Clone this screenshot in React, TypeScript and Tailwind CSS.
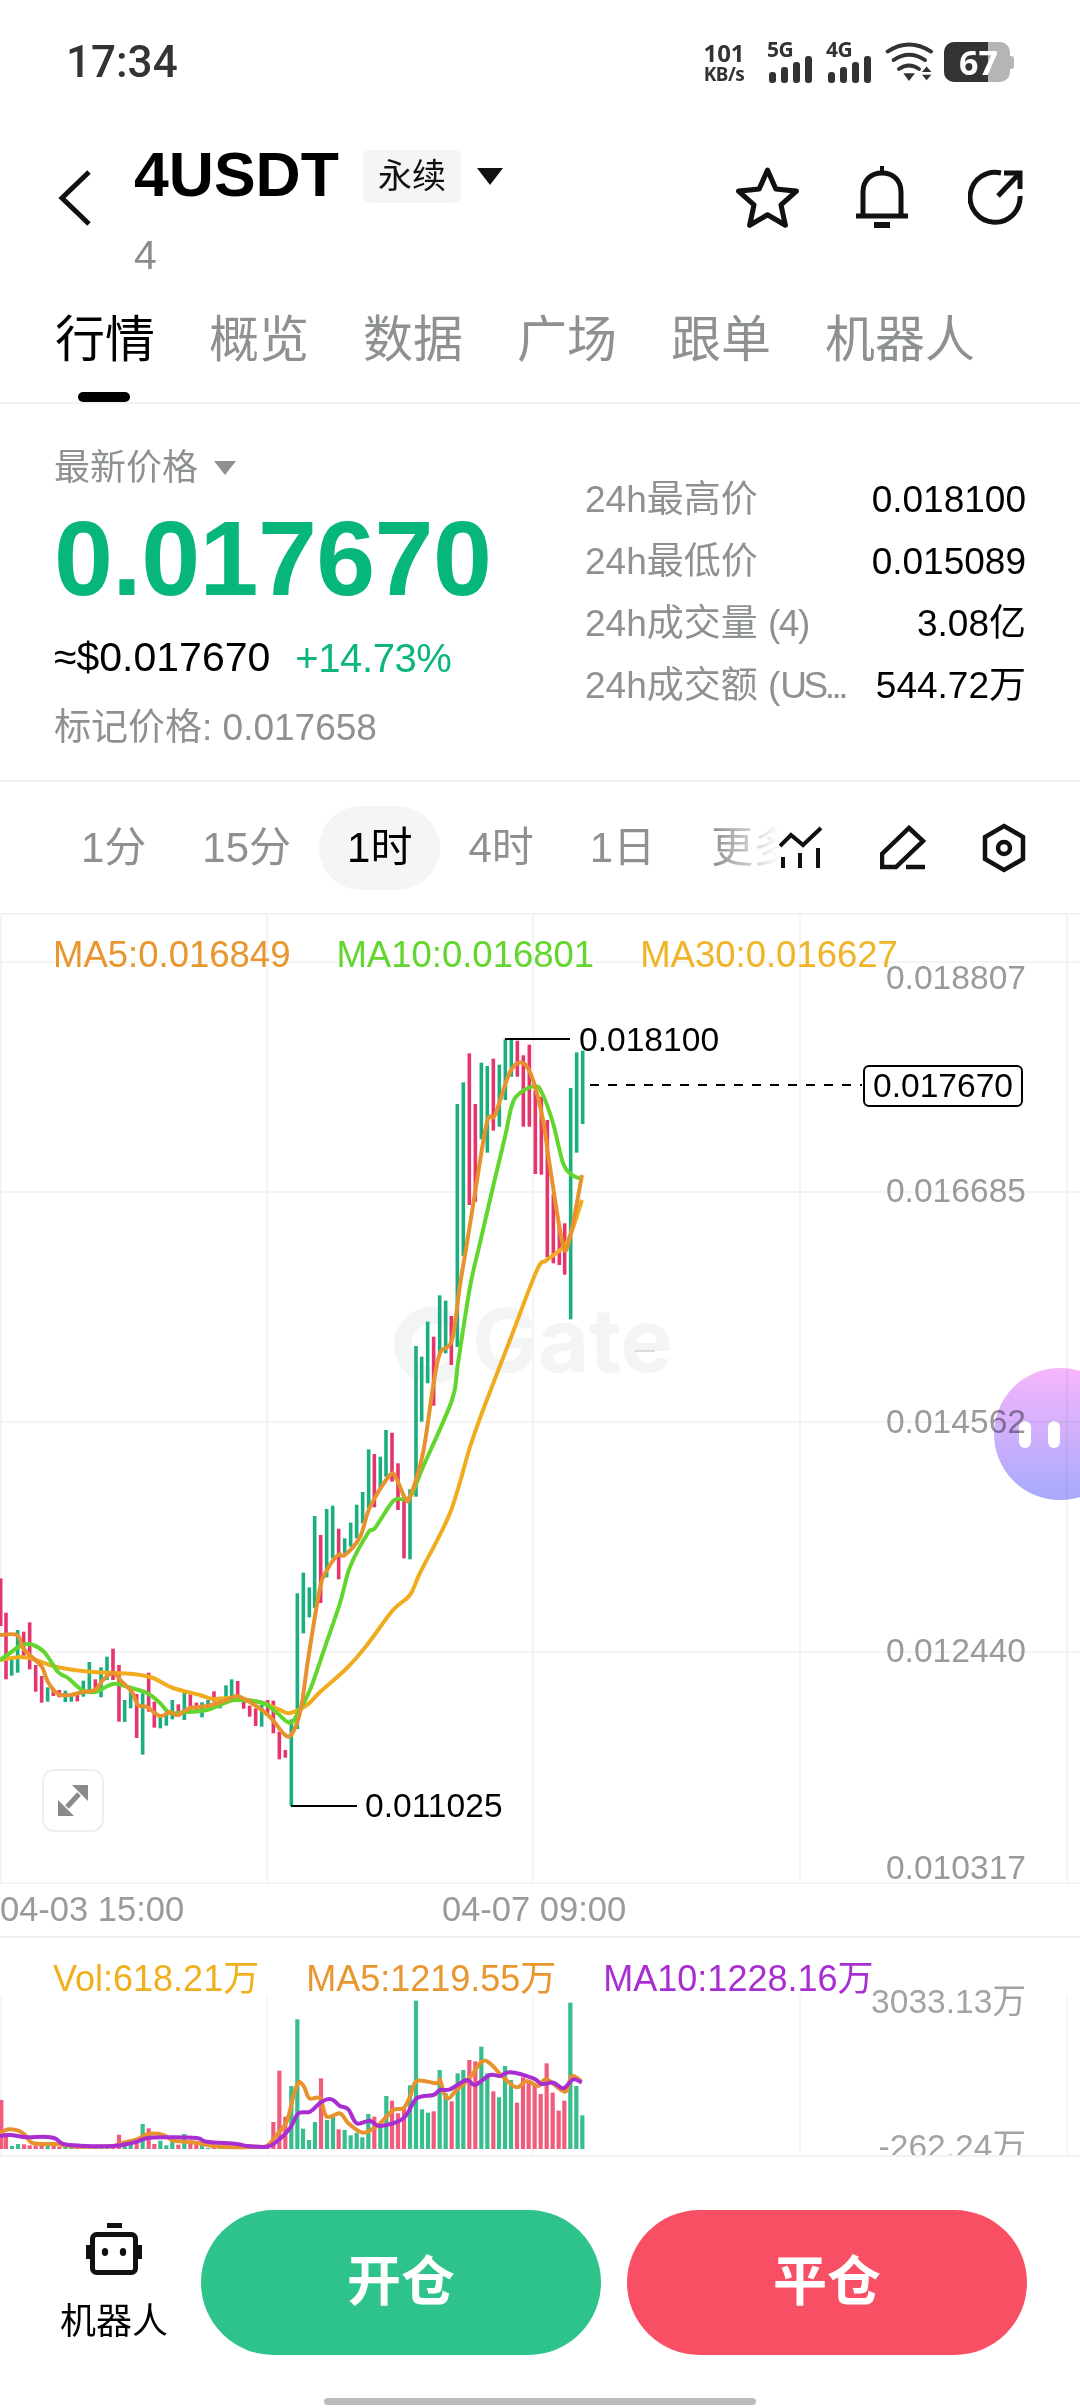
import React from 'react';

type Bar = [number, number, number, 'g' | 'r'];
type Pt = [number, number];

// read off the reference crops, converted to page px below
const barsA: Bar[] = [
  [2, 55, 198, 'r'], [18, 158, 358, 'r'], [35, 300, 347, 'g'], [53, 210, 338, 'g'], [71, 215, 290, 'r'],
  [89, 187, 328, 'r'], [107, 315, 395, 'r'], [125, 348, 428, 'r'], [143, 382, 425, 'g'], [160, 385, 408, 'r'],
  [178, 390, 412, 'r'], [196, 392, 426, 'g'], [214, 405, 425, 'g'], [232, 397, 424, 'r'], [250, 362, 410, 'g'],
  [268, 306, 392, 'g'], [286, 358, 390, 'r'], [303, 322, 412, 'g'], [321, 290, 360, 'g'], [339, 266, 360, 'r'],
  [357, 315, 485, 'r'], [374, 420, 486, 'g'], [392, 388, 445, 'g'], [410, 402, 534, 'r'], [428, 400, 584, 'g'],
  [446, 338, 455, 'r'], [463, 425, 503, 'r'], [481, 470, 505, 'g'], [499, 460, 497, 'g'], [517, 420, 478, 'g'],
  [535, 433, 470, 'r'], [553, 398, 480, 'g'], [571, 403, 440, 'r'], [589, 428, 450, 'r'], [606, 427, 472, 'g'],
  [624, 420, 440, 'g'], [642, 394, 425, 'r'], [660, 415, 445, 'g'], [678, 376, 420, 'g'], [695, 358, 410, 'g'],
  [713, 363, 425, 'r'], [731, 420, 446, 'r'], [749, 437, 470, 'r'], [767, 445, 498, 'r'], [785, 435, 500, 'g'],
  [803, 420, 460, 'r'], [820, 422, 520, 'r'], [838, 515, 598, 'r'], [856, 570, 593, 'r'], [874, 478, 738, 'g'],
  [892, 100, 507, 'g'], [910, 38, 220, 'g'], [928, 82, 172, 'g'],
];
const barsB: Bar[] = [
  [74, 678, 954, 'g'], [92, 735, 939, 'r'], [110, 657, 862, 'g'], [128, 647, 805, 'g'], [146, 716, 868, 'r'],
  [164, 745, 790, 'g'], [182, 698, 770, 'g'], [200, 644, 745, 'g'], [218, 606, 700, 'g'], [236, 478, 655, 'g'],
  [253, 492, 652, 'r'], [271, 500, 600, 'g'], [288, 420, 560, 'g'], [306, 428, 575, 'r'], [324, 520, 660, 'r'],
  [342, 630, 805, 'r'], [360, 598, 808, 'g'], [378, 168, 620, 'g'], [395, 200, 395, 'g'], [413, 95, 280, 'g'],
  [431, 140, 347, 'r'], [449, 16, 190, 'g'], [467, 32, 190, 'g'], [484, 78, 225, 'r'],
];
const barsC: Bar[] = [
  [232, 372, 1101, 'g'], [250, 307, 828, 'g'], [268, 220, 675, 'r'], [286, 372, 665, 'r'], [304, 248, 478, 'g'],
  [322, 258, 518, 'g'], [340, 236, 452, 'r'], [358, 254, 440, 'g'], [376, 178, 360, 'g'], [394, 180, 290, 'g'],
  [412, 182, 290, 'r'], [430, 226, 440, 'r'], [448, 194, 440, 'r'], [466, 332, 582, 'r'], [484, 350, 584, 'r'],
  [502, 420, 832, 'r'], [520, 642, 850, 'r'], [538, 740, 855, 'r'], [554, 730, 884, 'r'], [572, 324, 1018, 'g'],
  [590, 217, 518, 'g'], [608, 212, 432, 'g'],
];

const ma5: Pt[] = [
  [0, 1635], [17, 1635], [23, 1648], [33, 1658], [42, 1667], [48, 1682], [58, 1694], [70, 1695], [83, 1692],
  [95, 1690], [103, 1680], [113, 1673], [122, 1682], [132, 1692], [138, 1705], [147, 1707], [160, 1716],
  [170, 1712], [178, 1715], [190, 1708], [207, 1706], [227, 1700], [237, 1696], [253, 1704], [270, 1717],
  [283, 1733], [290, 1736], [297, 1723], [302, 1703], [308, 1660], [320, 1588], [327, 1570], [338, 1555],
  [345, 1555], [360, 1537], [370, 1507], [390, 1475], [397, 1480], [405, 1498], [410, 1497], [423, 1453],
  [433, 1387], [440, 1353], [452, 1340], [460, 1285], [467, 1243], [475, 1193], [487, 1122], [495, 1115],
  [510, 1072], [523, 1063], [533, 1080], [543, 1120], [550, 1167], [563, 1245], [570, 1237], [582, 1175],
];
const ma10: Pt[] = [
  [0, 1660], [10, 1653], [22, 1645], [33, 1645], [45, 1653], [58, 1672], [68, 1678], [82, 1690], [95, 1692],
  [113, 1684], [128, 1687], [147, 1693], [160, 1703], [170, 1713], [187, 1712], [207, 1710], [227, 1702],
  [238, 1700], [263, 1703], [277, 1713], [290, 1723], [298, 1713], [310, 1690], [325, 1647], [340, 1603],
  [350, 1567], [368, 1533], [375, 1528], [390, 1505], [397, 1499], [410, 1497], [423, 1467], [452, 1400],
  [458, 1363], [470, 1287], [480, 1243], [493, 1187], [505, 1137], [512, 1105], [520, 1093], [535, 1086],
  [542, 1093], [553, 1123], [563, 1163], [572, 1175], [582, 1179],
];
const ma30: Pt[] = [
  [0, 1660], [20, 1657], [33, 1659], [57, 1667], [93, 1672], [133, 1674], [153, 1678], [173, 1688], [200, 1695],
  [213, 1699], [233, 1698], [263, 1703], [280, 1710], [290, 1713], [307, 1705], [320, 1692], [347, 1668],
  [367, 1645], [393, 1610], [410, 1595], [420, 1573], [450, 1513], [470, 1447], [483, 1410], [510, 1340],
  [537, 1270], [547, 1260], [567, 1242], [582, 1200],
];

const volA: [number, number, 'g' | 'r'][] = [
  [4, 300, 'r'], [18, 400, 'r'], [36, 438, 'g'], [54, 432, 'g'], [72, 433, 'r'], [89, 436, 'r'], [107, 436, 'r'],
  [125, 436, 'r'], [143, 434, 'g'], [161, 435, 'r'], [178, 440, 'r'], [196, 440, 'g'], [214, 442, 'g'], [232, 442, 'r'],
  [250, 442, 'g'], [268, 435, 'g'], [286, 442, 'r'], [303, 442, 'g'], [321, 442, 'g'], [339, 442, 'r'], [357, 404, 'r'],
  [374, 435, 'g'], [392, 434, 'g'], [410, 425, 'r'], [428, 372, 'g'], [446, 385, 'r'], [463, 432, 'r'], [481, 422, 'g'],
  [499, 436, 'g'], [517, 420, 'g'], [535, 434, 'r'], [553, 402, 'g'], [571, 420, 'r'], [589, 428, 'r'], [606, 434, 'g'],
  [624, 444, 'g'], [642, 442, 'r'], [660, 442, 'g'], [678, 440, 'g'], [695, 438, 'g'], [713, 436, 'r'], [731, 440, 'r'],
  [749, 442, 'r'], [767, 442, 'r'], [785, 442, 'g'], [803, 442, 'r'], [820, 366, 'r'], [838, 212, 'r'], [856, 350, 'r'],
  [874, 258, 'g'], [892, 58, 'g'],
];
const volB: [number, number, 'g' | 'r'][] = [
  [9, 386, 'g'], [27, 420, 'g'], [45, 366, 'g'], [63, 235, 'r'], [81, 360, 'g'], [99, 350, 'g'], [116, 388, 'r'],
  [134, 390, 'g'], [152, 406, 'g'], [170, 398, 'g'], [187, 412, 'g'], [205, 342, 'g'], [223, 350, 'r'], [241, 372, 'g'],
  [259, 288, 'g'], [276, 302, 'r'], [294, 340, 'r'], [312, 322, 'r'], [330, 256, 'g'], [348, 2, 'g'], [366, 328, 'g'],
  [384, 338, 'g'], [401, 334, 'r'], [419, 210, 'g'], [437, 280, 'g'], [455, 304, 'r'], [473, 220, 'g'], [490, 210, 'g'],
  [508, 180, 'r'], [526, 184, 'r'], [544, 140, 'g'], [562, 220, 'g'], [580, 274, 'r'], [597, 292, 'g'], [615, 198, 'g'],
  [633, 240, 'g'], [651, 308, 'r'], [669, 232, 'r'], [686, 242, 'r'], [704, 252, 'r'], [722, 282, 'r'], [740, 190, 'r'],
  [758, 278, 'r'], [776, 332, 'r'], [793, 302, 'r'], [811, 8, 'g'], [829, 258, 'g'], [847, 346, 'g'],
];
const volMa5A: Pt[] = [
  [0, 400], [25, 388], [55, 392], [75, 405], [95, 428], [130, 432], [175, 432], [190, 436], [240, 440], [340, 438],
  [370, 428], [410, 418], [445, 402], [490, 405], [520, 422], [560, 425], [600, 430], [640, 438], [700, 442],
  [760, 440], [800, 438], [830, 405], [860, 365], [880, 290], [895, 248],
];
const volMa5B: Pt[] = [
  [12, 260], [28, 295], [60, 295], [80, 350], [120, 340], [145, 370], [190, 398], [235, 375], [280, 330], [310, 325],
  [330, 290], [350, 243], [410, 250], [420, 240], [440, 295], [470, 270], [510, 232], [545, 185], [570, 190], [610, 232],
  [650, 262], [680, 243], [715, 258], [740, 238], [795, 275], [815, 228], [845, 245],
];
const volMa10A: Pt[] = [
  [0, 408], [30, 405], [80, 412], [130, 410], [165, 415], [190, 432], [240, 437], [340, 438], [400, 428], [440, 415],
  [500, 412], [590, 414], [620, 425], [710, 432], [740, 438], [800, 440], [830, 425], [870, 385], [895, 340],
];
const volMa10B: Pt[] = [
  [30, 335], [65, 305], [95, 298], [120, 318], [145, 328], [170, 370], [210, 362], [240, 378], [310, 355], [350, 295],
  [400, 285], [420, 270], [450, 268], [500, 240], [525, 255], [570, 225], [600, 228], [630, 217], [700, 235], [725, 252],
  [760, 248], [790, 265], [820, 238], [845, 248],
];

const smooth = (p: Pt[]) => {
  let d = `M${p[0][0]} ${p[0][1]}`;
  for (let i = 0; i < p.length - 1; i++) {
    const a = p[Math.max(i - 1, 0)];
    const b = p[i];
    const c = p[i + 1];
    const e = p[Math.min(i + 2, p.length - 1)];
    d += ` C${b[0] + (c[0] - a[0]) / 6} ${b[1] + (c[1] - a[1]) / 6} ${c[0] - (e[0] - b[0]) / 6} ${c[1] - (e[1] - b[1]) / 6} ${c[0]} ${c[1]}`;
  }
  return d;
};

const volPx = (a: Pt[], b: Pt[]): Pt[] => [
  ...a.map(([x, y]): Pt => [x / 3, 2000 + y / 3]),
  ...b.map(([x, y]): Pt => [300 + x / 3, 2000 + y / 3]),
];

const Candles = ({ bars, ox, oy }: { bars: Bar[]; ox: number; oy: number }) => (
  <>
    {bars.map(([x, t, b, c]) => (
      <rect
        key={x}
        x={ox + x / 3 - 1.8}
        y={oy + t / 3}
        width={3.6}
        height={(b - t) / 3}
        fill={c === 'g' ? '#1bae80' : '#e6356c'}
      />
    ))}
  </>
);

const VolBars = ({ bars, ox }: { bars: [number, number, 'g' | 'r'][]; ox: number }) => (
  <>
    {bars.map(([x, t, c]) => (
      <rect
        key={x}
        x={ox + x / 3 - 2.1}
        y={2000 + t / 3}
        width={4.2}
        height={2149 - (2000 + t / 3)}
        fill={c === 'g' ? '#38bd8d' : '#f25c7c'}
      />
    ))}
  </>
);

const Signal = ({ label }: { label: string }) => (
  <div className="flex flex-col w-[46px] h-[40px]">
    <span className="font-['Noto_Sans',sans-serif] font-bold text-[21px] leading-[13px] text-[#333] pt-[1px] tracking-[-0.5px]">{label}</span>
    <div className="flex items-end gap-[5px] h-[27px] pl-[2px]">
      <div className="w-[7px] h-[11px] rounded-[3px] bg-[#333]" />
      <div className="w-[7px] h-[16px] rounded-[3px] bg-[#333]" />
      <div className="w-[7px] h-[21px] rounded-[3px] bg-[#333]" />
      <div className="w-[7px] h-[27px] rounded-[3px] bg-[#333]" />
    </div>
  </div>
);

const StatusBar = () => (
  <div className="h-[124px] flex items-center pl-[66px] pr-[66px] text-[#333]">
    <span className="font-['Roboto',sans-serif] font-medium text-[44px] leading-none">17:34</span>
    <div className="ml-auto flex items-center">
      <div className="flex flex-col items-center w-[46px] font-['Noto_Sans',sans-serif] font-bold">
        <span className="text-[24px] leading-[24px]">101</span>
        <span className="text-[19px] leading-[18px] tracking-[-0.5px]">KB/s</span>
      </div>
      <div className="ml-[20px]"><Signal label="5G" /></div>
      <div className="ml-[13px]"><Signal label="4G" /></div>
      <svg className="ml-[13px]" width="48" height="40" viewBox="670 124 152 124" fill="none">
        <path d="M678 153 Q746 108 816 153" stroke="#333" strokeWidth="12" strokeLinecap="round" />
        <path d="M697 180 Q746 146 797 180" stroke="#333" strokeWidth="12" strokeLinecap="round" />
        <path d="M714 208 Q746 186 778 208" stroke="#333" strokeWidth="12" strokeLinecap="round" />
        <path d="M728 222 H765 L746 246 Z" fill="#333" />
        <path d="M787 218 H817 L802 200 Z M787 226 H817 L802 244 Z" fill="#333" />
      </svg>
      <div className="relative ml-[11px] w-[66px] h-[40px] rounded-[10px] bg-[#b5b5b5] overflow-hidden flex">
        <div className="w-[44px] h-full bg-[#333]" />
        <span className="absolute left-[15px] top-0 leading-[40px] text-[34px] font-bold text-white font-['Noto_Sans',sans-serif]">67</span>
      </div>
      <div className="w-[4px] h-[13px] rounded-r-[3px] bg-[#b5b5b5]" />
    </div>
  </div>
);

const Header = () => (
  <div className="h-[170px] flex items-start">
    <svg className="ml-[58px] mt-[46px]" width="34" height="56" viewBox="0 0 34 56" fill="none">
      <path d="M31 2 L4 28 L31 54" stroke="#111" strokeWidth="5" />
    </svg>
    <div className="ml-[42px] pt-[24px]">
      <div className="flex items-center h-[56px]">
        <span className="text-[62.5px] leading-none font-bold text-black -translate-y-[2px]">4USDT</span>
        <span className="ml-[24px] w-[98px] h-[53px] rounded-[6px] bg-[#f5f5f5] flex items-center justify-center text-[34px] text-[#111]">永续</span>
        <svg className="ml-[16px]" width="26" height="17" viewBox="0 0 26 17"><path d="M0 0 H26 L13 17 Z" fill="#111" /></svg>
      </div>
      <div className="mt-[26px] h-[50px] leading-[50px] text-[41px] text-[#8c8c8c]">4</div>
    </div>
    <div className="ml-auto mr-[56px] mt-[42px] h-[62px] flex items-center">
      <svg width="63" height="61" viewBox="0 0 62 60" fill="none">
        <path d="M31 3 L39.2 21.7 L59.5 23.7 L44.3 37.3 L48.6 57.3 L31 47 L13.4 57.3 L17.7 37.3 L2.5 23.7 L22.8 21.7 Z" stroke="#111" strokeWidth="5" strokeLinejoin="round" />
      </svg>
      <svg className="ml-[57px]" width="52" height="62" viewBox="0 0 52 62" fill="none">
        <path d="M26 0 V7" stroke="#111" strokeWidth="4" />
        <path d="M7 50 V26 C7 14 15 7 26 7 C37 7 45 14 45 26 V50" stroke="#111" strokeWidth="5" />
        <path d="M0 50 H52" stroke="#111" strokeWidth="5" />
        <rect x="18" y="56" width="16" height="6" fill="#111" />
      </svg>
      <svg className="ml-[60px]" width="56" height="56" viewBox="0 0 56 56" fill="none">
        <path d="M33 4 A25 25 0 1 0 52 27" stroke="#111" strokeWidth="5" />
        <path d="M30 27 L50 6" stroke="#111" strokeWidth="5" />
        <path d="M36 4 H52 V20" stroke="#111" strokeWidth="5" />
      </svg>
    </div>
  </div>
);

const Tabs = () => (
  <div className="h-[110px] border-b-2 border-[#f2f2f2]">
    <div className="flex items-center h-[92px] pl-[55px] gap-[54px] text-[50px] text-[#8e9192]">
      <span className="text-black">行情</span>
      <span>概览</span>
      <span>数据</span>
      <span>广场</span>
      <span>跟单</span>
      <span>机器人</span>
    </div>
    <div className="mt-[6px] ml-[78px] w-[52px] h-[10px] rounded-full bg-black" />
  </div>
);

const StatRow = ({ label, value }: { label: React.ReactNode; value: string }) => (
  <div className="flex items-center justify-between h-[62px]">
    <span className="text-[37px] text-[#8e9192] whitespace-nowrap">{label}</span>
    <span className="text-[37px] text-black">{value}</span>
  </div>
);

const Stats = () => (
  <div className="h-[378px] border-b-2 border-[#f2f2f2] flex">
    <div className="w-[585px] pl-[54px] pt-[44px]">
      <div className="flex items-center h-[40px] text-[36px] text-[#8e9192]">
        最新价格
        <svg className="ml-[16px]" width="22" height="14" viewBox="0 0 22 14"><path d="M0 0 H22 L11 14 Z" fill="#8e9192" /></svg>
      </div>
      <div className="mt-[18px] h-[104px] leading-[104px] text-[106px] font-bold text-[#07b67c] tracking-[-0.6px]">0.017670</div>
      <div className="mt-[23px] h-[50px] flex items-center text-[41px] text-black">
        <span>≈$0.017670</span>
        <span className="ml-[25px] text-[40px] text-[#0bb67d] tracking-[-0.4px]">+14.73%</span>
      </div>
      <div className="mt-[20px] h-[50px] leading-[50px] text-[37px] text-[#8e9192]">标记价格: 0.017658</div>
    </div>
    <div className="flex-1 pr-[54px] pt-[65px]">
      <StatRow label="24h最高价" value="0.018100" />
      <StatRow label="24h最低价" value="0.015089" />
      <StatRow label={<>24h成交量 <span className="tracking-[-1.5px]">(4)</span></>} value="3.08亿" />
      <StatRow label={<>24h成交额 (<span className="tracking-[-3.5px]">US...</span></>} value="544.72万" />
    </div>
  </div>
);

const TimeFrames = () => (
  <div className="h-[133px] border-b-2 border-[#f2f2f2] flex items-center">
    <div className="relative w-[779px] shrink-0 overflow-hidden flex items-center pl-[53px] text-[42px] text-[#8e9192] whitespace-nowrap">
      <span className="px-[28px]">1分</span>
      <span className="px-[28px]">15分</span>
      <span className="px-[28px] h-[84px] leading-[84px] rounded-full bg-[#f5f5f5] text-black">1时</span>
      <span className="px-[28px]">4时</span>
      <span className="px-[28px]">1日</span>
      <span className="px-[28px]">更多</span>
      <div className="absolute right-0 top-0 bottom-0 w-[65px] bg-gradient-to-r from-transparent to-white" />
    </div>
    <svg width="44" height="44" viewBox="779 826 44 44" fill="none">
      <path d="M780 846 L791 835 L803 845 L821 828" stroke="#111" strokeWidth="4" />
      <path d="M783 857 V868 M800 853 V868 M818 848 V868" stroke="#111" strokeWidth="4" />
    </svg>
    <svg className="ml-[57px]" width="46" height="46" viewBox="880 824 46 46" fill="none">
      <path d="M909 827 L923 840 L896 866 L882 866 L882 853 Z" stroke="#111" strokeWidth="4.5" />
      <path d="M906 866 H925" stroke="#111" strokeWidth="4.5" />
    </svg>
    <svg className="ml-[56px]" width="44" height="50" viewBox="982 823 44 50" fill="none">
      <path d="M1004 826 L1023 837 V859 L1004 870 L985 859 V837 Z" stroke="#111" strokeWidth="4.5" />
      <circle cx="1004" cy="848" r="6" stroke="#111" strokeWidth="4.5" />
    </svg>
  </div>
);

const axisLabels = [
  { text: '0.018807', cls: 'top-[43px]' },
  { text: '0.016685', cls: 'top-[256px]' },
  { text: '0.014562', cls: 'top-[487px]' },
  { text: '0.012440', cls: 'top-[716px]' },
  { text: '0.010317', cls: 'top-[933px]' },
];

const KlineChart = () => (
  <div className="relative h-[1023px] border-b-2 border-[#f2f2f2] flex flex-col overflow-hidden">
    <svg className="absolute left-0 top-0" width="1080" height="1023" viewBox="0 915 1080 1023" fill="none">
      {[962, 1192, 1422, 1652, 1883].map((y) => (
        <path key={y} d={`M0 ${y} H1080`} stroke="#f0f0f0" strokeWidth="1.5" />
      ))}
      {[1, 267, 533, 800, 1067].map((x) => (
        <path key={x} d={`M${x} 915 V1883`} stroke="#f0f0f0" strokeWidth="1.5" />
      ))}
      {/* watermark */}
      <path d="M455 1325 A30 30 0 1 0 455 1365" stroke="#f3f4f5" strokeWidth="17" />
      <text x="472" y="1372" fontSize="88" fontWeight="700" fill="#f3f4f5" fontFamily="Inter, sans-serif">Gate</text>
      <path d="M635 1351 H655" stroke="#bbb" strokeWidth="1" />
      <Candles bars={barsA} ox={0} oy={1560} />
      <Candles bars={barsB} ox={290} oy={1290} />
      <Candles bars={barsC} ox={380} oy={980} />
      <path d={smooth(ma30)} stroke="#f0ac1e" strokeWidth="4" strokeLinejoin="round" />
      <path d={smooth(ma10)} stroke="#62d62e" strokeWidth="4" strokeLinejoin="round" />
      <path d={smooth(ma5)} stroke="#e8922e" strokeWidth="4" strokeLinejoin="round" />
      <path d="M505 1039 H570" stroke="#000" strokeWidth="2" />
      <path d="M291 1806 H357" stroke="#000" strokeWidth="2" />
      <path d="M590 1085 H862" stroke="#000" strokeWidth="2" strokeDasharray="9 9" />
    </svg>

    <div className="relative h-[80px] flex items-center pl-[53px] gap-[46px] text-[36.5px] whitespace-nowrap">
      <span className="text-[#e8962e]">MA5:0.016849</span>
      <span className="text-[#63d62e]">MA10:0.016801</span>
      <span className="text-[#f0b429]">MA30:0.016627</span>
    </div>

    {axisLabels.map((l) => (
      <span key={l.text} className={`absolute right-[54px] h-[40px] leading-[40px] text-[33.6px] text-[#9a9a9a] ${l.cls}`}>
        {l.text}
      </span>
    ))}
    <span className="absolute left-[579px] top-[105px] h-[40px] leading-[40px] text-[33.6px] text-black">0.018100</span>
    <span className="absolute left-[365px] top-[871px] h-[40px] leading-[40px] text-[33.6px] text-black">0.011025</span>
    <span className="absolute left-[863px] top-[150px] w-[160px] h-[42px] rounded-[6px] border-2 border-black bg-white flex items-center justify-center text-[33.6px] text-black">0.017670</span>
    <div className="absolute left-[42px] top-[854px] w-[62px] h-[63px] rounded-[12px] border-2 border-[#eeeeee] bg-white flex items-center justify-center">
      <svg width="30" height="31" viewBox="0 0 30 31" fill="none">
        <path d="M14 0 H30 V16 Z M0 15 V31 H16 Z" fill="#8a8a8a" />
        <path d="M9 22 L21 9" stroke="#8a8a8a" strokeWidth="5" />
      </svg>
    </div>

    <div className="mt-auto h-[52px] flex items-center text-[34.5px] text-[#9a9a9a] whitespace-nowrap">
      <span className="w-[442px]">04-03 15:00</span>
      <span>04-07 09:00</span>
    </div>
  </div>
);

const VolumeChart = () => (
  <div className="relative h-[219px] border-b-2 border-[#f2f2f2] overflow-hidden">
    <svg className="absolute left-0 top-0" width="1080" height="219" viewBox="0 1938 1080 219" fill="none">
      {[1, 267, 533, 800, 1067].map((x) => (
        <path key={x} d={`M${x} 1995 V2157`} stroke="#f3f3f3" strokeWidth="1.5" />
      ))}
      <VolBars bars={volA} ox={0} />
      <VolBars bars={volB} ox={300} />
      <path d={smooth(volPx(volMa5A, volMa5B))} stroke="#e8922e" strokeWidth="4" strokeLinejoin="round" />
      <path d={smooth(volPx(volMa10A, volMa10B))} stroke="#a92ed2" strokeWidth="4" strokeLinejoin="round" />
    </svg>
    <div className="relative h-[82px] flex items-center pl-[53px] gap-[47px] text-[36px] whitespace-nowrap">
      <span className="text-[#f0b01e]">Vol:618.21万</span>
      <span className="text-[#e8962e]">MA5:1219.55万</span>
      <span className="text-[#a92ed2]">MA10:1228.16万</span>
    </div>
    <span className="absolute right-[54px] top-[44px] h-[40px] leading-[40px] text-[33.6px] text-[#a3a3a3]">3033.13万</span>
    <span className="absolute right-[54px] top-[189px] h-[40px] leading-[40px] text-[33.6px] text-[#a3a3a3]">-262.24万</span>
  </div>
);

const BottomBar = () => (
  <div className="flex-1 flex flex-col pt-[53px]">
    <div className="flex items-start">
      <div className="ml-[60px] w-[108px] pt-[13px] flex flex-col items-center">
        <svg width="56" height="52" viewBox="0 0 56 52" fill="none">
          <rect x="21" y="0" width="15" height="5" fill="#111" />
          <rect x="6.5" y="11.5" width="43" height="38" rx="4" stroke="#111" strokeWidth="5" />
          <rect x="0" y="22" width="4" height="14" fill="#111" />
          <rect x="52" y="22" width="4" height="14" fill="#111" />
          <ellipse cx="19" cy="29" rx="3.2" ry="4" fill="#111" />
          <ellipse cx="37" cy="29" rx="3.2" ry="4" fill="#111" />
        </svg>
        <span className="mt-[27px] h-[40px] leading-[40px] text-[36px] text-black whitespace-nowrap">机器人</span>
      </div>
      <button className="ml-[33px] w-[400px] h-[145px] rounded-full bg-[#2dc38a] text-white text-[54px] font-bold">开仓</button>
      <button className="ml-[26px] w-[400px] h-[145px] rounded-full bg-[#f94f64] text-white text-[54px] font-bold">平仓</button>
    </div>
    <div className="mt-[43px] mx-auto w-[432px] h-[7px] rounded-full bg-[#bbbbbb]" />
  </div>
);

export default function App() {
  return (
    <div className="relative w-[1080px] h-[2408px] overflow-hidden bg-white flex flex-col font-['Liberation_Sans','Noto_Sans_CJK_SC',sans-serif]">
      <StatusBar />
      <Header />
      <Tabs />
      <Stats />
      <TimeFrames />
      <KlineChart />
      <VolumeChart />
      <BottomBar />
      {/* floating assistant bubble */}
      <div className="absolute left-[994px] top-[1368px] w-[132px] h-[132px] rounded-full bg-gradient-to-b from-[#f6b5fb] to-[#a7a9fc] mix-blend-multiply flex items-center gap-[17px] pl-[25px]">
        <div className="w-[12px] h-[27px] rounded-full bg-white" />
        <div className="w-[12px] h-[27px] rounded-full bg-white" />
      </div>
    </div>
  );
}
